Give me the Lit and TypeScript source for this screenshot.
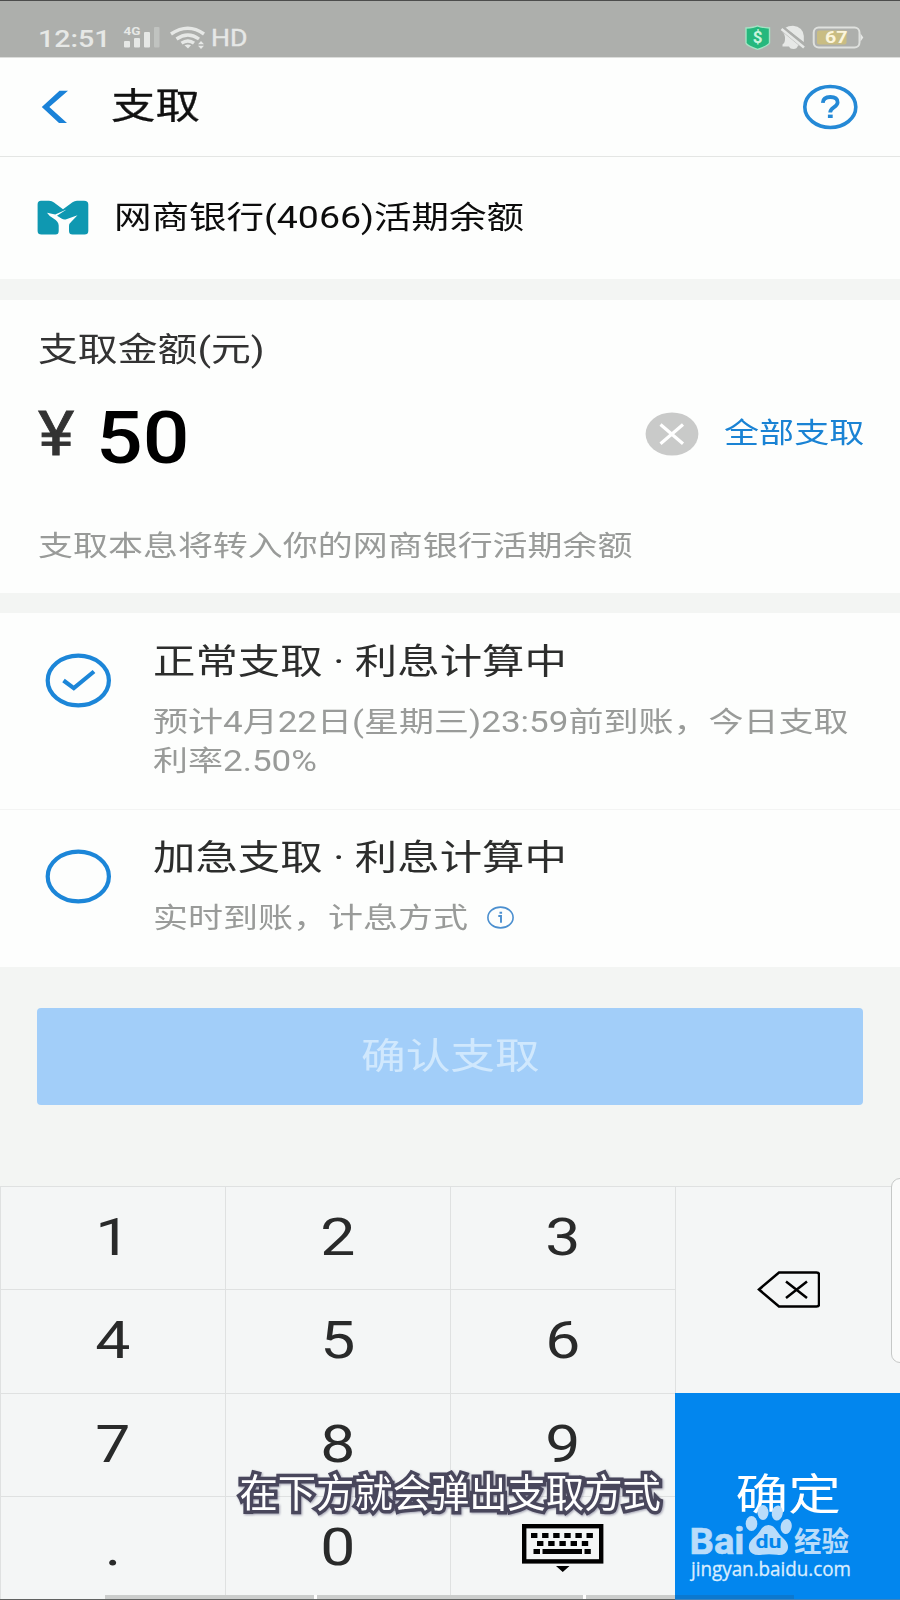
import { LitElement, html, css, svg } from "lit";
import { customElement, state } from "lit/decorators.js";

@customElement("app-root")
export class AppRoot extends LitElement {
  @state() private amount = "50";
  @state() private selected = 0;

  static styles = css`
    :host {
      display: block;
      position: relative;
      width: 900px;
      height: 1600px;
      overflow: hidden;
      background: #f3f5f3;
      color: #111;
      font-family: Roboto, "Noto Sans CJK SC", sans-serif;
    }
    * { box-sizing: border-box; }
    svg { display: block; flex: none; }
    .wide {
      display: block;
      width: max-content;
      white-space: pre;
      transform: scaleX(1.219);
      transform-origin: 0 50%;
    }
    .mid { transform-origin: 50% 50%; }
    .page { display: flex; flex-direction: column; height: 1600px; }
    .status {
      height: 58px;
      background: #adafac;
      border-top: 1px solid #4c4d4c;
      border-bottom: 1px solid #dcdddb;
      display: flex;
      justify-content: space-between;
    }
    .header {
      height: 99px;
      background: #fdfefd;
      border-bottom: 1px solid #e4e6e4;
      display: flex;
      align-items: center;
      padding: 1px 42px 0 40px;
    }
    .title { font-size: 36.5px; line-height: 50px; margin-left: 41.5px; flex: 1; -webkit-text-stroke: 0.3px; }
    .bank {
      height: 122px;
      background: #fdfefd;
      display: flex;
      align-items: center;
      padding: 0 37px;
      gap: 24.5px;
    }
    .bank .wide { font-size: 30.75px; line-height: 40px; color: #0c0c0c; padding-top: 1px; }
    .amount {
      margin-top: 21px;
      height: 294px;
      background: #fdfefd;
      padding: 29px 38px 0;
    }
    .label { font-size: 32.7px; line-height: 42px; color: #333; }
    .row { display: flex; align-items: center; height: 84px; margin-top: 23px; }
    .yen { font-size: 61px; line-height: 84px; color: #333; font-weight: 400; -webkit-text-stroke: 0.8px; transform: scaleX(1.13); width: 58px; margin-top: -4px; }
    .num { font-size: 71.5px; line-height: 84px; color: #000; font-weight: 500; transform: scaleX(1.15); margin-top: 6px; }
    .clear { margin-left: auto; margin-top: -4px; }
    .all { font-size: 28.8px; line-height: 40px; color: #1a83d4; width: 138.5px; margin-left: 25px; margin-top: -6px; }
    .hint { font-size: 28.7px; line-height: 40px; color: #999b99; margin-top: 48px; }
    .options { margin-top: 20px; background: #fdfefd; }
    .option { display: flex; padding: 24px 0 0 45px; gap: 42px; height: 157px; }
    .option.first { height: 197px; padding-top: 25px; border-bottom: 1px solid #f3f4f3; }
    .option svg.radio { margin-top: 15px; }
    .otitle { font-size: 34.8px; line-height: 48px; color: #2c2d2c; }
    .osub { font-size: 28.73px; line-height: 39px; color: #999b99; margin-top: 17px; }
    .line { display: flex; }
    .line .wide { width: 333.5px; }
    .info { margin-top: 24px; }
    .submit {
      margin: 41px 37px 0;
      height: 97px;
      border: 0;
      border-radius: 4px;
      background: #a2cef9;
      color: #d0e8fd;
      font: 36.7px/97px Roboto, "Noto Sans CJK SC", sans-serif;
      display: flex;
      justify-content: center;
      align-items: center;
      padding: 0;
    }
    .pad {
      margin-top: 81px;
      height: 414px;
      display: grid;
      grid-template-columns: repeat(4, 225px);
      grid-template-rows: 103px 104px 103px 104px;
      background: #f4f6f6;
    }
    .key {
      border-top: 1px solid #dfe1e1;
      border-left: 1px solid #dfe1e1;
      display: flex;
      align-items: center;
      justify-content: center;
      font-size: 52.5px;
      line-height: 60px;
      color: #292a2a;
    }
    .key .wide { transform: scaleX(1.19); margin-top: -3px; }
    .c1 { grid-column: 1; }
    .c2 { grid-column: 2; }
    .c3 { grid-column: 3; }
    .del { grid-column: 4; grid-row: 1 / 3; }
    .ok {
      grid-column: 4;
      grid-row: 3 / 5;
      background: #0286ee;
      border: 0;
      color: #fff;
      font-size: 43.2px;
    }
    .ok .wide { transform: scaleX(1.219); margin: -2px 0 0 2px; }
    .caption {
      position: absolute;
      left: 239.5px;
      top: 1464px;
      font-size: 38.3px;
      line-height: 54px;
      white-space: nowrap;
      color: #fff;
      font-family: "Noto Sans CJK SC", sans-serif;
      -webkit-text-stroke: 7px #49475c;
      paint-order: stroke fill;
      filter: drop-shadow(1px 1px 1px rgba(80, 78, 110, 0.5));
    }
    .panel {
      position: absolute;
      left: 891px;
      top: 1178px;
      width: 20px;
      height: 185px;
      border: 1.5px solid #c6c8c7;
      border-radius: 9px;
      background: #fafbfa;
    }
    .mark { position: absolute; left: 680px; top: 1500px; }
    .progress { position: absolute; left: 0; top: 1595px; }
  `;

  private radio(on: boolean) {
    return html`<svg class="radio" width="66" height="55" viewBox="0 0 66 55" fill="none" stroke="#1c86d8">
      <ellipse cx="33.3" cy="27.5" rx="30.6" ry="24.8" stroke-width="4.2"></ellipse>
      ${on ? svg`<path d="M18.500 27.500 L28.800 35.200 L49 18.500" stroke-width="4.2"></path>` : ""}
    </svg>`;
  }

  private keyboard() {
    const top = [0, 1, 2, 3, 4, 5].map((i) => svg`<rect x=${9 + i * 11.1} y="9" width="6.4" height="5"></rect>`);
    const mid = [0, 1, 2, 3, 4].map((i) => svg`<rect x=${15 + i * 11.2} y="17" width="6.4" height="5"></rect>`);
    return html`<svg width="82" height="50" viewBox="0 0 82 50">
      <rect x="2.2" y="2.2" width="77" height="35.2" fill="none" stroke="#000" stroke-width="4.4"></rect>
      ${top}${mid}
      <path d="M11.500 25h6.500v5h-6.500zM20.500 25h39.500v5h-39.500zM62.500 25h6.300v5h-6.300zM34 42h13.500l-6.750 6z"></path>
    </svg>`;
  }

  private key(label: string, col: number) {
    return html`<div class="key c${col}"><span class="wide mid">${label}</span></div>`;
  }

  render() {
    return html`
      <div class="page">
        <div class="status">
          <svg width="260" height="56" viewBox="0 1 260 56" fill="#e6e8e6">
            <text x="38" y="46.500" font-size="24.500" font-weight="500" textLength="72.500" lengthAdjust="spacingAndGlyphs">12:51</text>
            <text x="123.500" y="35" font-size="10.500" font-weight="700" textLength="17" lengthAdjust="spacingAndGlyphs">4G</text>
            <rect x="124" y="41" width="6" height="6.500" rx="1"></rect>
            <rect x="134" y="38" width="6" height="9.500" rx="1"></rect>
            <rect x="144" y="32" width="6" height="15.500" rx="1"></rect>
            <rect x="154" y="27" width="5.500" height="20.500" rx="1" opacity=".35"></rect>
            <g fill="none" stroke="#e6e8e6" stroke-width="3.4">
              <path d="M171 34 Q188 22.500 204 34"></path>
              <path d="M176.500 39 Q188 31 199 39"></path>
              <path d="M181.500 43.200 Q188 38.800 194 43.200"></path>
            </g>
            <path d="M184.500 45.300 Q188 43.500 191 45.300 L188 48.500Z M198 44.200 L201 41 L204 44.200Z M198 45.800 L201 49 L204 45.800Z"></path>
            <text x="211" y="46.300" font-size="24" stroke="#e6e8e6" stroke-width=".4" textLength="36.500" lengthAdjust="spacingAndGlyphs">HD</text>
          </svg>
          <svg width="170" height="56" viewBox="730 1 170 56" fill="#e6e8e6">
            <path d="M746 28 Q754 27.500 757.500 25.800 Q761 27.500 769.500 28 V43 Q768 46 757.500 49.300 Q747 46 746 43Z" fill="#25b87d" stroke="#a5e3c4" stroke-width="1.4"></path>
            <text x="757.600" y="43.300" font-size="17" font-weight="700" fill="#c9f4dd" text-anchor="middle">$</text>
            <path d="M785.500 27.800 Q788 25.800 793 25.800 Q803 27 803.800 36 V42 Z"></path>
            <path d="M782 31.500 L799 45.500 H798 Q797 49 793.500 49 Q790 49 789 46.500 H782.500 V44.500 Q785 43 785 39 V37 Q785 34 782 31.500Z"></path>
            <path d="M781.500 29 L804 47.500" fill="none" stroke="#e6e8e6" stroke-width="2.6"></path>
            <path d="M783.500 27.200 L806 45.500" fill="none" stroke="#adafac" stroke-width="1.6"></path>
            <rect x="813.700" y="27.500" width="45.800" height="20" rx="5" fill="none" stroke="#dfe1de" stroke-width="2"></rect>
            <path d="M860.500 33.500 L863.300 37.500 L860.500 41.500Z"></path>
            <rect x="817" y="30.500" width="29.500" height="14" rx="2" fill="#c9bd83"></rect>
            <text x="825" y="43.300" font-size="16" font-weight="700" fill="#fbf5dc" textLength="22.500" lengthAdjust="spacingAndGlyphs">67</text>
          </svg>
        </div>

        <div class="header">
          <svg width="29" height="34" viewBox="0 0 29 34"><path d="M19.500 .8 H28 L9.300 17 L27 33 H19 L1.800 17Z" fill="#1a82d8"></path></svg>
          <div class="title"><span class="wide">支取</span></div>
          <svg width="56" height="46" viewBox="0 0 56 46" fill="none" stroke="#2489d6">
            <ellipse cx="28.300" cy="23" rx="25.500" ry="20.500" stroke-width="3.6"></ellipse>
            <path d="M20.800 18.800 Q21.200 13 28.300 13 Q35.800 13 35.600 18.500 Q35.500 21 31.800 23.300 Q28.200 25.600 28.200 28.500" stroke-width="3.8"></path>
            <path d="M25.900 32.300h4.800" stroke-width="3.4"></path>
          </svg>
        </div>

        <div class="bank">
          <svg width="52" height="35" viewBox="0 0 52 35">
            <path d="M4 .8 H12 Q15 .8 17 2.500 L26 9.200 L35.500 2.300 Q37.500 .8 40 .8 H47 Q51.300 .8 51.300 4.500 V31 Q51.300 34.500 47.500 34.500 H35.500 Q32 34.500 32 31 V26 Q32 23.500 34.500 21.500 L40.500 15.200 L29.300 19.200 Q27 20 24.500 18.500 L20 15.800 L29.500 9.500 L18.200 14.600 L10 12.700 Q12 16 16.500 18.500 Q21.500 21.500 21.700 25.500 V31 Q21.700 34.500 18.500 34.500 H4.500 Q.6 34.500 .6 31 V4.500 Q.6 .8 4 .8Z" fill="#0f98b1"></path>
          </svg>
          <span class="wide">网商银行(4066)活期余额</span>
        </div>

        <div class="amount">
          <span class="wide label">支取金额(元)</span>
          <div class="row">
            <span class="wide yen">¥</span>
            <span class="wide num">${this.amount}</span>
            <svg class="clear" width="54" height="44" viewBox="0 0 54 44">
              <ellipse cx="27" cy="22" rx="26.400" ry="21.600" fill="#c9cac9"></ellipse>
              <path d="M15.500 12.500 L38 31.700 M38 12.500 L15.500 31.700" stroke="#fff" stroke-width="3.2"></path>
            </svg>
            <span class="wide all">全部支取</span>
          </div>
          <span class="wide hint">支取本息将转入你的网商银行活期余额</span>
        </div>

        <div class="options">
          <div class="option first">
            ${this.radio(this.selected === 0)}
            <div>
              <span class="wide otitle">正常支取 · 利息计算中</span>
              <span class="wide osub">预计4月22日(星期三)23:59前到账，今日支取
利率2.50%</span>
            </div>
          </div>
          <div class="option">
            ${this.radio(this.selected === 1)}
            <div>
              <span class="wide otitle">加急支取 · 利息计算中</span>
              <div class="line">
                <span class="wide osub">实时到账，计息方式</span>
                <svg class="info" width="27" height="23" viewBox="0 0 27 23" fill="none" stroke="#4b8fcf">
                  <ellipse cx="13.500" cy="11.500" rx="12.600" ry="10.400" stroke-width="1.600"></ellipse>
                  <path d="M11.300 10h2.700v6.800M12.500 6.700h2.600" stroke-width="1.900"></path>
                </svg>
              </div>
            </div>
          </div>
        </div>

        <button class="submit"><span class="wide mid">确认支取</span></button>

        <div class="pad">
          ${this.key("1", 1)}${this.key("2", 2)}${this.key("3", 3)}
          <div class="key del">
            <svg width="64" height="38" viewBox="-1 0.500 64 38" fill="none" stroke="#000">
              <path d="M2 19 L22 2 H59.500 Q62 2 62 4 V34 Q62 36 59.500 36 H22Z" stroke-width="2.500"></path>
              <path d="M29 11 L50 27.500 M50 11 L29 27.500" stroke-width="2.500"></path>
            </svg>
          </div>
          ${this.key("4", 1)}${this.key("5", 2)}${this.key("6", 3)}
          ${this.key("7", 1)}${this.key("8", 2)}${this.key("9", 3)}
          <div class="key ok"><span class="wide mid">确定</span></div>
          ${this.key(".", 1)}${this.key("0", 2)}
          <div class="key c3">${this.keyboard()}</div>
        </div>
      </div>

      <svg class="progress" width="900" height="5" viewBox="0 0 900 5">
        <path d="M105 0h209v4h-209zM317 0h266v4h-266zM586 0h89v4h-89z" fill="#cbcdcc"></path>
        <path d="M314 0h3v4h-3zM583 0h3v4h-3z" fill="#fff"></path>
        <path d="M675 0h119v4h-119z" fill="#0b78cf"></path>
        <path d="M0 4h675v1h-675z" fill="#606261"></path>
        <path d="M675 4h225v1h-225z" fill="#3d83bd"></path>
      </svg>
      <div class="panel"></div>
      <div class="caption">在下方就会弹出支取方式</div>

      <svg class="mark" width="190" height="90" viewBox="680 1500 190 90" fill="#b9dcfa">
        <text x="689.500" y="1553.500" font-size="36" font-weight="700" font-family="Roboto, sans-serif" stroke="#b9dcfa" stroke-width=".6" textLength="55" lengthAdjust="spacingAndGlyphs">Bai</text>
        <ellipse cx="751.500" cy="1523.500" rx="5.800" ry="7.500"></ellipse>
        <ellipse cx="763" cy="1512.500" rx="5.500" ry="7.500"></ellipse>
        <ellipse cx="777.300" cy="1513" rx="5.500" ry="7.500" transform="rotate(10 777.300 1513)"></ellipse>
        <ellipse cx="786.200" cy="1526.500" rx="5.500" ry="7.500" transform="rotate(10 786.200 1526.500)"></ellipse>
        <path d="M768.500 1525 Q773.500 1525 777 1531 Q779 1534.500 784 1539 Q789.500 1544.500 787.500 1550 Q785 1556 777 1554.800 Q768.500 1553.500 760 1555 Q751 1555.500 749 1549 Q748 1543 753 1538.500 Q758 1534.500 760 1531 Q763 1525 768.500 1525Z"></path>
        <text x="755.500" y="1547.500" font-size="19" font-weight="700" font-family="Roboto, sans-serif" fill="#0286ee" textLength="26" lengthAdjust="spacingAndGlyphs">du</text>
        <text x="794" y="1551.500" font-size="28" font-weight="700" font-family="Noto Sans CJK SC, sans-serif" textLength="55" lengthAdjust="spacingAndGlyphs">经验</text>
        <text x="691" y="1575.500" font-size="20" font-family="Open Sans, sans-serif" fill="#d9edff" stroke="#d9edff" stroke-width=".3" textLength="160" lengthAdjust="spacingAndGlyphs">jingyan.baidu.com</text>
      </svg>
    `;
  }
}
